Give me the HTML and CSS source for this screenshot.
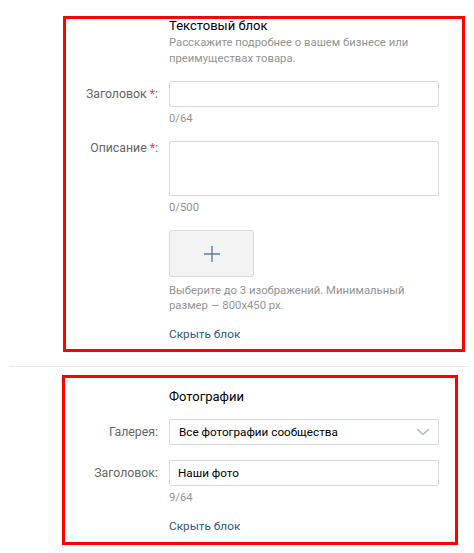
FILE: index.html
```html
<!DOCTYPE html>
<html lang="ru">
<head>
<meta charset="utf-8">
<link rel="stylesheet" href="styles.css">
</head>
<body>
<div class="page">
  <section class="block block-text">
    <div class="row">
      <div class="label"></div>
      <div class="field">
        <div class="title title-first">Текстовый блок</div>
        <div class="desc">Расскажите подробнее о вашем бизнесе или преимуществах товара.</div>
      </div>
    </div>
    <div class="row row-gap">
      <div class="label">Заголовок <span class="req">*</span>:</div>
      <div class="field">
        <div class="input"></div>
        <div class="counter">0/64</div>
      </div>
    </div>
    <div class="row row-gap">
      <div class="label label-top">Описание <span class="req">*</span>:</div>
      <div class="field">
        <div class="input textarea"></div>
        <div class="counter">0/500</div>
      </div>
    </div>
    <div class="row row-gap">
      <div class="label"></div>
      <div class="field">
        <div class="upload">
          <svg width="18" height="18" viewBox="0 0 18 18"><path d="M9 1v16M1 9h16" stroke="#5a80aa" stroke-width="1.4" fill="none"/></svg>
        </div>
        <div class="hint">Выберите до 3 изображений. Минимальный размер — 800x450 px.</div>
        <a class="link link-1">Скрыть блок</a>
      </div>
    </div>
  </section>

  <div class="divider"></div>

  <section class="block block-photo">
    <div class="row">
      <div class="label"></div>
      <div class="field">
        <div class="title">Фотографии</div>
      </div>
    </div>
    <div class="row row-gap">
      <div class="label">Галерея:</div>
      <div class="field">
        <div class="input select">
          <span>Все фотографии сообщества</span>
          <svg width="14" height="8" viewBox="0 0 14 8"><path d="M1 1l6 5.5L13 1" stroke="#aeb7c2" stroke-width="1.3" fill="none"/></svg>
        </div>
      </div>
    </div>
    <div class="row row-gap2">
      <div class="label">Заголовок:</div>
      <div class="field">
        <div class="input filled">Наши фото</div>
        <div class="counter">9/64</div>
        <a class="link link-2">Скрыть блок</a>
      </div>
    </div>
  </section>
</div>
</body>
</html>
```

FILE: styles.css
```css
* { box-sizing: border-box; }
html, body { margin: 0; padding: 0; background: #fff; }
body {
  font-family: Roboto, "Liberation Sans", Arial, sans-serif;
  font-size: 12.5px;
  color: #000;
  width: 474px;
  height: 553px;
  overflow: hidden;
}
.page { padding-top: 16px; }

.block {
  border: 3px solid #ff0000;
}
.block-text {
  margin-left: 63px;
  width: 402px;
  height: 336px;
}
.block-photo {
  margin-left: 62px;
  width: 396px;
  height: 170px;
  padding-top: 11px;
  padding-left: 1px;
}

.row {
  display: grid;
  grid-template-columns: 92px 270px;
  column-gap: 11px;
}
.row-gap { margin-top: 14px; }
.row-gap2 { margin-top: 15px; }

.label {
  text-align: right;
  color: #656565;
  font-size: 12.3px;
  line-height: 16px;
  padding-top: 5px;
  white-space: nowrap;
}
.label-top { padding-top: 0; margin-top: -1px; }
.req { color: #e64646; }

.title {
  font-size: 13px;
  line-height: 16px;
  color: #000;
}
.title-first { line-height: 13px; }
.desc {
  margin-top: 3px;
  color: #939393;
  font-size: 11.3px;
  line-height: 16px;
}

.input {
  height: 26px;
  border: 1px solid #d3d9de;
  border-radius: 2px;
  background: #fff;
}
.textarea { height: 55px; }
.filled, .select {
  font-size: 11.7px;
  line-height: 24px;
  color: #000;
  padding-left: 8px;
}
.select {
  padding-left: 9px;
  padding-right: 8px;
  display: flex;
  align-items: center;
  justify-content: space-between;
}
.counter {
  margin-top: 4px;
  color: #939393;
  font-size: 11.3px;
  line-height: 16px;
}

.upload {
  width: 85px;
  height: 47px;
  background: #f3f3f3;
  border: 1px solid #d7d8db;
  border-radius: 3px;
  display: flex;
  align-items: center;
  justify-content: center;
}
.hint {
  margin-top: 6px;
  color: #939393;
  font-size: 11.3px;
  line-height: 15px;
  width: 250px;
}
.link {
  display: block;
  color: #2a5885;
  font-size: 11.8px;
  line-height: 16px;
  cursor: pointer;
}
.link-1 { margin-top: 13px; }
.link-2 { margin-top: 12px; }

.divider {
  height: 1px;
  background: #e7e8ec;
  margin: 14px 6px 8px 9px;
}
```
